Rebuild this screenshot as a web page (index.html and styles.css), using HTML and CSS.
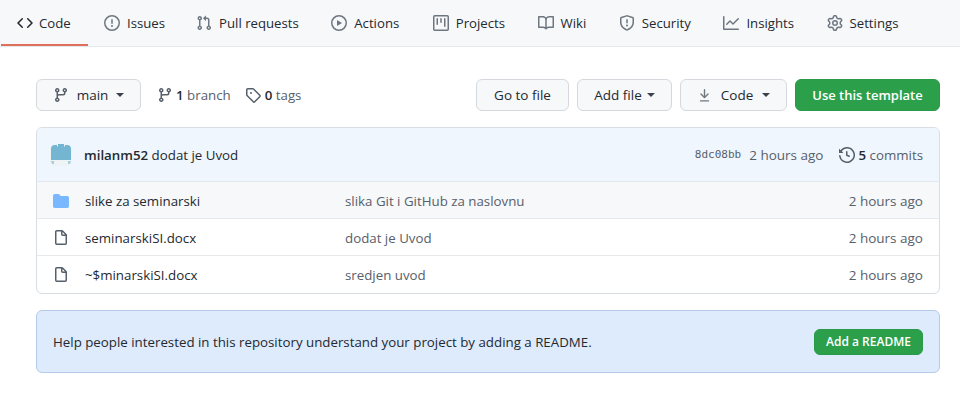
FILE: index.html
```html
<!DOCTYPE html>
<html lang="en">
<head>
    <meta charset="UTF-8">
    <meta name="viewport" content="width=device-width, initial-scale=1.0">
    <title>seminarski</title>
    <link rel="stylesheet" href="styles.css">
</head>
<body>
    <nav class="tabs">
        <a class="tab tab-active"><svg class="icon icon-dark" viewBox="0 0 16 16"><path d="M4.72 3.22a.75.75 0 011.06 1.06L2.06 8l3.72 3.72a.75.75 0 11-1.06 1.06L.47 8.53a.75.75 0 010-1.06l4.25-4.25zm6.56 0a.75.75 0 10-1.06 1.06L13.94 8l-3.72 3.72a.75.75 0 101.06 1.06l4.25-4.25a.75.75 0 000-1.06l-4.25-4.25z"/></svg>Code</a>
        <a class="tab tab-issues"><svg class="icon" viewBox="0 0 16 16"><path d="M8 1.5a6.5 6.5 0 100 13 6.5 6.5 0 000-13zM0 8a8 8 0 1116 0A8 8 0 010 8zm9 3a1 1 0 11-2 0 1 1 0 012 0zm-.25-6.25a.75.75 0 00-1.5 0v3.5a.75.75 0 001.5 0v-3.5z"/></svg>Issues</a>
        <a class="tab"><svg class="icon" viewBox="0 0 16 16"><path d="M7.177 3.073L9.573.677A.25.25 0 0110 .854v4.792a.25.25 0 01-.427.177L7.177 3.427a.25.25 0 010-.354zM3.75 2.5a.75.75 0 100 1.5.75.75 0 000-1.5zm-2.25.75a2.25 2.25 0 113 2.122v5.256a2.251 2.251 0 11-1.5 0V5.372A2.25 2.25 0 011.5 3.25zM11 2.5h-1V4h1a1 1 0 011 1v5.628a2.251 2.251 0 101.5 0V5A2.5 2.5 0 0011 2.5zm1 10.25a.75.75 0 111.5 0 .75.75 0 01-1.5 0zM3.75 12a.75.75 0 100 1.5.75.75 0 000-1.5z"/></svg>Pull requests</a>
        <a class="tab tab-actions"><svg class="icon" viewBox="0 0 16 16"><path d="M1.5 8a6.5 6.5 0 1113 0 6.5 6.5 0 01-13 0zM8 0a8 8 0 100 16A8 8 0 008 0zM6.379 5.227A.25.25 0 006 5.442v5.117a.25.25 0 00.379.214l4.264-2.559a.25.25 0 000-.428L6.379 5.227z"/></svg>Actions</a>
        <a class="tab"><svg class="icon" viewBox="0 0 16 16"><path d="M1.75 0A1.75 1.75 0 000 1.75v12.5C0 15.216.784 16 1.75 16h12.5A1.75 1.75 0 0016 14.25V1.75A1.75 1.75 0 0014.25 0H1.75zM1.5 1.75a.25.25 0 01.25-.25h12.5a.25.25 0 01.25.25v12.5a.25.25 0 01-.25.25H1.75a.25.25 0 01-.25-.25V1.75zM11.75 3a.75.75 0 00-.75.75v7.5a.75.75 0 001.5 0v-7.5a.75.75 0 00-.75-.75zm-8.25.75a.75.75 0 011.5 0v5.5a.75.75 0 01-1.5 0v-5.5zM8 3a.75.75 0 00-.75.75v3.5a.75.75 0 001.5 0v-3.5A.75.75 0 008 3z"/></svg>Projects</a>
        <a class="tab"><svg class="icon" viewBox="0 0 16 16"><path d="M0 1.75A.75.75 0 01.75 1h4.253c1.227 0 2.317.59 3 1.501A3.744 3.744 0 0111.006 1h4.245a.75.75 0 01.75.75v10.5a.75.75 0 01-.75.75h-4.507a2.25 2.25 0 00-1.591.659l-.622.621a.75.75 0 01-1.06 0l-.622-.621A2.25 2.25 0 005.258 13H.75a.75.75 0 01-.75-.75V1.75zm8.755 3a2.25 2.25 0 012.25-2.25H14.5v9h-3.757c-.71 0-1.4.201-1.992.572l.004-7.322zm-1.504 7.324l.004-5.073-.002-2.253A2.25 2.25 0 005.003 2.5H1.5v9h3.757a3.75 3.75 0 011.994.574z"/></svg>Wiki</a>
        <a class="tab"><svg class="icon" viewBox="0 0 16 16"><path d="M7.467.133a1.75 1.75 0 011.066 0l5.25 1.68A1.75 1.75 0 0115 3.48V7c0 1.566-.32 3.182-1.303 4.682-.983 1.498-2.585 2.813-5.032 3.855a1.7 1.7 0 01-1.33 0c-2.447-1.042-4.049-2.357-5.032-3.855C1.32 10.182 1 8.566 1 7V3.48a1.75 1.75 0 011.217-1.667l5.25-1.68zm.61 1.429a.25.25 0 00-.153 0l-5.25 1.68a.25.25 0 00-.174.238V7c0 1.358.275 2.666 1.057 3.86.784 1.194 2.121 2.34 4.366 3.297a.2.2 0 00.154 0c2.245-.956 3.582-2.104 4.366-3.298C13.225 9.666 13.5 8.36 13.5 7V3.48a.25.25 0 00-.174-.237l-5.25-1.68zM9 10.5a1 1 0 11-2 0 1 1 0 012 0zm-.25-5.75a.75.75 0 10-1.5 0v3a.75.75 0 001.5 0v-3z"/></svg>Security</a>
        <a class="tab"><svg class="icon" viewBox="0 0 16 16"><path d="M1.5 1.75a.75.75 0 00-1.5 0v12.5c0 .414.336.75.75.75h14.5a.75.75 0 000-1.5H1.5V1.75zm14.28 2.53a.75.75 0 00-1.06-1.06L10 7.94 7.53 5.47a.75.75 0 00-1.06 0L3.22 8.72a.75.75 0 001.06 1.06L7 7.06l2.47 2.47a.75.75 0 001.06 0l5.25-5.25z"/></svg>Insights</a>
        <a class="tab"><svg class="icon" viewBox="0 0 16 16"><path d="M7.429 1.525a6.593 6.593 0 011.142 0c.036.003.108.036.137.146l.289 1.105c.147.56.55.967.997 1.189.174.086.341.183.501.29.417.278.97.423 1.53.27l1.102-.303c.11-.03.175.016.195.046.219.31.41.641.573.989.014.031.022.11-.059.19l-.815.806c-.411.406-.562.957-.53 1.456a4.588 4.588 0 010 .582c-.032.499.119 1.05.53 1.456l.815.806c.08.08.073.159.059.19a6.494 6.494 0 01-.573.99c-.02.029-.086.074-.195.045l-1.103-.303c-.559-.153-1.112-.008-1.529.27-.16.107-.327.204-.5.29-.449.222-.851.628-.998 1.189l-.289 1.105c-.029.11-.101.143-.137.146a6.613 6.613 0 01-1.142 0c-.036-.003-.108-.037-.137-.146l-.289-1.105c-.147-.56-.55-.967-.997-1.189a4.502 4.502 0 01-.501-.29c-.417-.278-.97-.423-1.53-.27l-1.102.303c-.11.03-.175-.016-.195-.046a6.492 6.492 0 01-.573-.989c-.014-.031-.022-.11.059-.19l.815-.806c.411-.406.562-.957.53-1.456a4.587 4.587 0 010-.582c.032-.499-.119-1.05-.53-1.456l-.815-.806c-.08-.08-.073-.159-.059-.19a6.44 6.44 0 01.573-.99c.02-.029.086-.075.195-.045l1.103.303c.559.153 1.112.008 1.529-.27.16-.107.327-.204.5-.29.449-.222.851-.628.998-1.189l.289-1.105c.029-.11.101-.143.137-.146zM8 0c-.236 0-.47.01-.701.03-.743.065-1.29.615-1.458 1.261l-.29 1.106c-.017.066-.078.158-.211.224a5.994 5.994 0 00-.668.386c-.123.082-.233.09-.3.071L3.27 2.776c-.644-.177-1.392.02-1.82.63a7.977 7.977 0 00-.704 1.217c-.315.675-.111 1.422.363 1.891l.815.806c.05.048.098.147.088.294a6.084 6.084 0 000 .772c.01.147-.038.246-.088.294l-.815.806c-.474.469-.678 1.216-.363 1.891.2.428.436.835.704 1.218.428.609 1.176.806 1.82.63l1.103-.303c.066-.019.176-.011.299.071.213.143.436.272.668.386.133.066.194.158.212.224l.289 1.106c.169.646.715 1.196 1.458 1.26a8.094 8.094 0 001.402 0c.743-.064 1.29-.614 1.458-1.26l.29-1.106c.017-.066.078-.158.211-.224a5.98 5.98 0 00.668-.386c.123-.082.233-.09.3-.071l1.102.302c.644.177 1.392-.02 1.82-.63.268-.382.505-.789.704-1.217.315-.675.111-1.422-.364-1.891l-.814-.806c-.05-.048-.098-.147-.088-.294a6.1 6.1 0 000-.772c-.01-.147.039-.246.088-.294l.814-.806c.475-.469.679-1.216.364-1.891a7.992 7.992 0 00-.704-1.218c-.428-.609-1.176-.806-1.82-.63l-1.103.303c-.066.019-.176.011-.299-.071a5.991 5.991 0 00-.668-.386c-.133-.066-.194-.158-.212-.224L10.16 1.29C9.99.645 9.444.095 8.701.031A8.094 8.094 0 008 0zm1.5 8a1.5 1.5 0 11-3 0 1.5 1.5 0 013 0zM11 8a3 3 0 11-6 0 3 3 0 016 0z"/></svg>Settings</a>
    </nav>

    <main class="container">
        <div class="toolbar">
            <button class="btn btn-branch"><svg class="icon icon-dark" viewBox="0 0 16 16"><path d="M11.75 2.5a.75.75 0 100 1.5.75.75 0 000-1.5zm-2.25.75a2.25 2.25 0 113 2.122V6A2.5 2.5 0 0110 8.5H6a1 1 0 00-1 1v1.128a2.251 2.251 0 11-1.5 0V5.372a2.25 2.25 0 111.5 0v1.836A2.492 2.492 0 016 7h4a1 1 0 001-1v-.628A2.25 2.25 0 019.5 3.25zM4.25 12a.75.75 0 100 1.5.75.75 0 000-1.5zM3.5 3.25a.75.75 0 111.5 0 .75.75 0 01-1.5 0z"/></svg><span>main</span><span class="caret"></span></button>
            <a class="stat"><svg class="icon icon-dark" viewBox="0 0 16 16"><path d="M11.75 2.5a.75.75 0 100 1.5.75.75 0 000-1.5zm-2.25.75a2.25 2.25 0 113 2.122V6A2.5 2.5 0 0110 8.5H6a1 1 0 00-1 1v1.128a2.251 2.251 0 11-1.5 0V5.372a2.25 2.25 0 111.5 0v1.836A2.492 2.492 0 016 7h4a1 1 0 001-1v-.628A2.25 2.25 0 019.5 3.25zM4.25 12a.75.75 0 100 1.5.75.75 0 000-1.5zM3.5 3.25a.75.75 0 111.5 0 .75.75 0 01-1.5 0z"/></svg><span><strong>1</strong> branch</span></a>
            <a class="stat"><svg class="icon icon-dark" viewBox="0 0 16 16"><path d="M2.5 7.775V2.75a.25.25 0 01.25-.25h5.025a.25.25 0 01.177.073l6.25 6.25a.25.25 0 010 .354l-5.025 5.025a.25.25 0 01-.354 0l-6.25-6.25a.25.25 0 01-.073-.177zm-1.5 0V2.75C1 1.784 1.784 1 2.75 1h5.025c.464 0 .91.184 1.238.513l6.25 6.25a1.75 1.75 0 010 2.474l-5.026 5.026a1.75 1.75 0 01-2.474 0l-6.25-6.25A1.75 1.75 0 011 7.775zM6 5a1 1 0 100 2 1 1 0 000-2z"/></svg><span><strong>0</strong> tags</span></a>
            <div class="toolbar-actions">
                <button class="btn btn-goto">Go to file</button>
                <button class="btn btn-add">Add file<span class="caret"></span></button>
                <button class="btn btn-code"><svg class="icon" viewBox="0 0 16 16"><path d="M7.47 10.78a.75.75 0 001.06 0l3.75-3.75a.75.75 0 00-1.06-1.06L8.75 8.44V1.75a.75.75 0 00-1.5 0v6.69L4.78 5.97a.75.75 0 00-1.06 1.06l3.75 3.75zM3.75 13a.75.75 0 000 1.5h8.5a.75.75 0 000-1.5h-8.5z"/></svg>Code<span class="caret"></span></button>
                <button class="btn btn-primary btn-template">Use this template</button>
            </div>
        </div>

        <div class="files">
            <div class="commit">
                <svg class="avatar" viewBox="0 0 22 22">
                    <rect width="22" height="22" rx="5" fill="#eef3f6"/>
                    <path d="M1 5a4 4 0 014-4h2v1.500h1V0h6v2.500h1V1h2a4 4 0 014 4v11H1z" fill="#74b6d2"/>
                    <path d="M1 17h3v3H2zM18 17h3l-1 3h-2z" fill="#a8cfe0"/>
                </svg>
                <span class="commit-msg"><strong>milanm52</strong> dodat je Uvod</span>
                <span class="sha">8dc08bb</span>
                <span class="muted">2 hours ago</span>
                <span class="commits"><svg class="icon icon-dark" viewBox="0 0 16 16"><path d="M1.643 3.143L.427 1.927A.25.25 0 000 2.104V5.750c0 .138.112.25.25.25h3.646a.25.25 0 00.177-.427L2.715 4.215a6.5 6.5 0 11-1.18 4.458.75.75 0 10-1.493.154 8.001 8.001 0 101.6-5.684zM7.75 4a.75.75 0 01.75.75v2.992l2.028.812a.75.75 0 01-.557 1.392l-2.5-1A.75.75 0 017 8.25v-3.5A.75.75 0 017.75 4z"/></svg><span><strong>5</strong> commits</span></span>
            </div>
            <div class="row row-shaded">
                <svg class="icon icon-folder" viewBox="0 0 16 16"><path d="M1.75 1A1.75 1.75 0 000 2.75v10.5C0 14.216.784 15 1.75 15h12.5A1.75 1.75 0 0016 13.25v-8.500A1.75 1.75 0 0014.25 3h-6.500a.25.25 0 01-.2-.1l-.9-1.200c-.33-.44-.85-.7-1.400-.7h-3.500z"/></svg>
                <span class="row-name">slike za seminarski</span>
                <span class="row-msg">slika Git i GitHub za naslovnu</span>
                <span class="muted">2 hours ago</span>
            </div>
            <div class="row">
                <svg class="icon icon-file" viewBox="0 0 16 16"><path d="M3.75 1.5a.25.25 0 00-.25.25v11.5c0 .138.112.25.25.25h8.5a.25.25 0 00.25-.25V6H9.75A1.75 1.75 0 018 4.25V1.5H3.75zm5.75.56v2.19c0 .138.112.25.25.25h2.19L9.5 2.06zM2 1.75C2 .784 2.784 0 3.75 0h5.086c.464 0 .909.184 1.237.513l3.414 3.414c.329.328.513.773.513 1.237v8.086A1.75 1.75 0 0112.25 15h-8.5A1.75 1.75 0 012 13.25V1.75z"/></svg>
                <span class="row-name">seminarskiSI.docx</span>
                <span class="row-msg">dodat je Uvod</span>
                <span class="muted">2 hours ago</span>
            </div>
            <div class="row">
                <svg class="icon icon-file" viewBox="0 0 16 16"><path d="M3.75 1.5a.25.25 0 00-.25.25v11.5c0 .138.112.25.25.25h8.5a.25.25 0 00.25-.25V6H9.75A1.75 1.75 0 018 4.25V1.5H3.75zm5.75.56v2.19c0 .138.112.25.25.25h2.19L9.5 2.06zM2 1.75C2 .784 2.784 0 3.75 0h5.086c.464 0 .909.184 1.237.513l3.414 3.414c.329.328.513.773.513 1.237v8.086A1.75 1.75 0 0112.25 15h-8.5A1.75 1.75 0 012 13.25V1.75z"/></svg>
                <span class="row-name">~$minarskiSI.docx</span>
                <span class="row-msg">sredjen uvod</span>
                <span class="muted">2 hours ago</span>
            </div>
        </div>

        <div class="readme-banner">
            <span>Help people interested in this repository understand your project by adding a README.</span>
            <button class="btn btn-primary btn-readme">Add a README</button>
        </div>
    </main>
</body>
</html>
```

FILE: styles.css
```css
* {
    box-sizing: border-box;
}
body {
    margin: 0;
    background-color: #fff;
    color: #24292f;
    font-family: "Open Sans", Arial, sans-serif;
    font-size: 13.3px;
    overflow: hidden;
}
.icon {
    width: 16px;
    height: 16px;
    fill: #6e7781;
    fill-rule: evenodd;
    flex: none;
}
.icon-dark {
    fill: #57606a;
}

/* Tabs */
.tabs {
    display: flex;
    height: 47px;
    padding-left: 1px;
    background-color: #f6f8fa;
    border-bottom: 1px solid #e6e9ec;
    font-size: 13.2px;
}
.tab {
    display: flex;
    align-items: center;
    gap: 7px;
    height: 46px;
    padding: 0 16.5px 0 16px;
    color: #24292f;
}
.tab-issues {
    padding-right: 15px;
}
.tab-actions {
    padding-right: 17.5px;
}
.tab-active {
    width: 87px;
    padding-top: 2px;
    gap: 6px;
    border-bottom: 2px solid #e0705c;
    font-weight: 500;
}
.tab-active .icon {
    fill: #24292f;
}

/* Toolbar */
.container {
    padding: 32px 20px 0 36px;
}
.toolbar {
    display: flex;
    align-items: center;
    height: 32px;
}
.toolbar-actions {
    display: flex;
    gap: 8px;
    margin-left: auto;
}
.btn {
    display: flex;
    align-items: center;
    justify-content: center;
    height: 32px;
    padding: 0 16px;
    border: 1px solid #d5d9dd;
    border-radius: 6px;
    background-color: #f6f8fa;
    color: #24292f;
    font-family: inherit;
    font-size: 13.5px;
    font-weight: 500;
}
.btn-primary {
    background-color: #2c9f4b;
    border-color: #2a994a;
    color: #fff;
    font-size: 13px;
    font-weight: 600;
}
.btn-branch {
    width: 105px;
    gap: 8px;
    margin-right: 16px;
}
.btn-goto {
    width: 93px;
}
.btn-add {
    width: 95px;
    gap: 5px;
}
.btn-code {
    width: 107px;
    gap: 9px;
}
.btn-code .icon {
    width: 15px;
    height: 15px;
}
.btn-template {
    width: 145px;
}
.caret {
    width: 0;
    height: 0;
    border-top: 4px solid #3b4249;
    border-left: 4px solid transparent;
    border-right: 4px solid transparent;
}
.stat {
    display: flex;
    align-items: center;
    gap: 3px;
    margin-right: 14px;
    color: #57606a;
}
.stat + .stat {
    gap: 4px;
}
.stat strong,
.commits strong {
    color: #24292f;
    font-weight: 600;
}

/* File list */
.files {
    margin-top: 16px;
    border: 1px solid #d8dee4;
    border-radius: 6px;
    overflow: hidden;
}
.commit {
    display: flex;
    align-items: center;
    height: 54px;
    padding: 0 16px 0 13px;
    background-color: #eff6fd;
    border-bottom: 1px solid #e2e8ee;
}
.avatar {
    width: 22px;
    height: 22px;
    margin-right: 12px;
}
.commit-msg {
    flex: 1;
}
.commit-msg strong {
    font-weight: 600;
}
.sha {
    margin-right: 8px;
    font-family: "DejaVu Sans Mono", monospace;
    font-size: 11px;
    color: #57606a;
}
.commits {
    display: flex;
    align-items: center;
    gap: 4px;
    margin-left: 15px;
    color: #57606a;
}
.muted {
    color: #57606a;
    font-size: 13.5px;
}
.row {
    display: flex;
    align-items: center;
    height: 37px;
    padding: 2px 16px 0;
    border-bottom: 1px solid #e6e9ec;
}
.row:last-child {
    padding-top: 1px;
    border-bottom: 0;
}
.row-shaded {
    background-color: #f6f8fa;
}
.icon-folder {
    fill: #79b8ff;
}
.icon-file {
    fill: #57606a;
}
.row-name {
    width: 260px;
    margin-left: 16px;
    color: #24292f;
}
.row-msg {
    flex: 1;
    color: #57606a;
}

/* Readme */
.readme-banner {
    display: flex;
    align-items: center;
    justify-content: space-between;
    height: 63px;
    margin-top: 16px;
    padding: 0 16px;
    background-color: #ddebfd;
    border: 1px solid #b6cbe8;
    border-radius: 6px;
}
.btn-readme {
    width: 109px;
    height: 26px;
    padding: 0;
    font-size: 12px;
}
```
